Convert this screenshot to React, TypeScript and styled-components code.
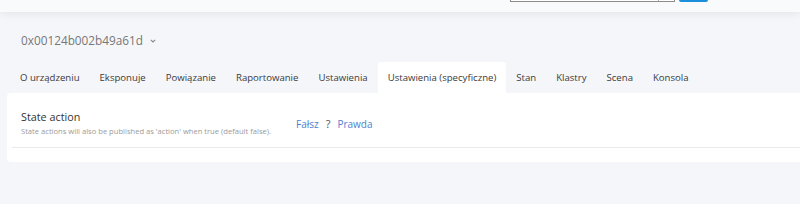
import { FunctionComponent } from "react";
import styled, { createGlobalStyle } from "styled-components";

const GlobalStyle = createGlobalStyle`
	html, body {
		margin: 0;
		padding: 0;
		background: #f5f6fa;
		font-family: "Open Sans", "Noto Sans", sans-serif;
		overflow: hidden;
	}
`;

const Header = styled.div`
	height: 12px;
	background: #f9fafc;
	box-shadow: 0 2px 8px rgba(0, 0, 0, 0.07);
	display: flex;
	justify-content: flex-end;
	align-items: flex-end;
	gap: 4px;
	padding-right: 92px;
	padding-bottom: 10px;
	box-sizing: border-box;
	overflow: hidden;
	position: relative;
	z-index: 1;
`;

const SearchBox = styled.div`
	width: 165px;
	height: 24px;
	box-sizing: border-box;
	border: 1px solid #8c8c8c;
	border-top: none;
	display: flex;
	justify-content: flex-end;
	background: #fff;
`;

const SearchAddon = styled.div`
	width: 15px;
	border-left: 1px solid #b5b5b5;
`;

const SearchButton = styled.div`
	width: 29px;
	height: 24px;
	background: #1c8fdc;
	border-radius: 0 0 2px 2px;
`;

const Main = styled.div`
	padding-left: 7px;
`;

const Title = styled.div`
	margin: 19px 0 0 14px;
	height: 17px;
	display: flex;
	align-items: center;
	gap: 7px;
	font-size: 11.8px;
	color: #777;
`;

const Chevron = styled.svg`
	width: 6px;
	height: 4px;
	margin-top: 2px;
`;

const Tabs = styled.div`
	margin: 14px 0 0 3px;
	display: flex;
	height: 31px;
`;

const Tab = styled.div<{ $active?: boolean }>`
	padding: 0 10px;
	display: flex;
	align-items: center;
	font-size: 9.6px;
	color: #3a3a3a;
	background: ${(p) => (p.$active ? "#fff" : "transparent")};
	border-radius: 3px 3px 0 0;
	white-space: nowrap;
`;

const Card = styled.div`
	background: #fff;
	border-radius: 4px 0 0 4px;
	padding-bottom: 14px;
`;

const Row = styled.div`
	margin-left: 5px;
	padding: 16px 0 11px 9px;
	border-bottom: 1px solid #e9e9ec;
	display: grid;
	grid-template-columns: 275px auto;
	align-items: center;
`;

const Label = styled.div`
	display: flex;
	flex-direction: column;
	gap: 2px;
`;

const LabelTitle = styled.div`
	font-size: 10.8px;
	color: #333;
`;

const LabelHint = styled.div`
	font-size: 7.6px;
	color: #9a9a9a;
`;

const Toggle = styled.div`
	display: flex;
	align-items: center;
	gap: 7px;
	font-size: 10px;
	margin-top: 2px;
`;

const Choice = styled.span`
	color: #4f7fd1;
`;

const Unknown = styled.span`
	color: #555;
	font-size: 11px;
`;

const tabs = [
	"O urządzeniu",
	"Eksponuje",
	"Powiązanie",
	"Raportowanie",
	"Ustawienia",
	"Ustawienia (specyficzne)",
	"Stan",
	"Klastry",
	"Scena",
	"Konsola"
];

const App: FunctionComponent = () => {
	return (
		<>
			<GlobalStyle />
			<Header>
				<SearchBox>
					<SearchAddon />
				</SearchBox>
				<SearchButton />
			</Header>
			<Main>
				<Title>
					0x00124b002b49a61d
					<Chevron viewBox="0 0 6 4">
						<path d="M0.8 0.8 L3 3 L5.2 0.8" fill="none" stroke="#888" strokeWidth="1.1" />
					</Chevron>
				</Title>
				<Tabs>
					{tabs.map((t) => (
						<Tab key={t} $active={t === "Ustawienia (specyficzne)"}>
							{t}
						</Tab>
					))}
				</Tabs>
				<Card>
					<Row>
						<Label>
							<LabelTitle>State action</LabelTitle>
							<LabelHint>State actions will also be published as 'action' when true (default false).</LabelHint>
						</Label>
						<Toggle>
							<Choice>Fałsz</Choice>
							<Unknown>?</Unknown>
							<Choice>Prawda</Choice>
						</Toggle>
					</Row>
				</Card>
			</Main>
		</>
	);
};

export default App;
